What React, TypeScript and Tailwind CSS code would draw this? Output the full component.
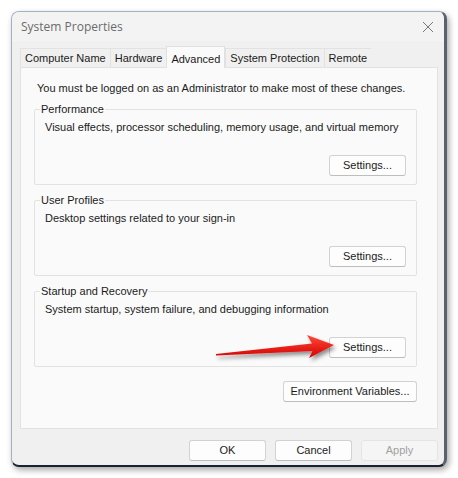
import React from "react";

const font = { fontFamily: '"Liberation Sans", Arial, sans-serif' };

function Btn({ label, w = "w-[77px]", disabled = false }: { label: string; w?: string; disabled?: boolean }) {
  return (
    <button
      className={`${w} h-[21px] rounded-[3px] border text-[11px] leading-none flex items-center justify-center ${
        disabled
          ? "bg-[#f5f5f5] border-[#e4e4e4] text-[#a0a0a0]"
          : "bg-[#fdfdfd] border-[#d2d2d2] border-b-[#bdbdbd] text-[#1b1b1b]"
      }`}
    >
      {label}
    </button>
  );
}

function Group({ title, desc }: { title: string; desc: string }) {
  return (
    <fieldset className="min-w-0 border border-[#e2e2e2] rounded-[2px] ml-[13px] mr-[20px] px-[6px] h-[81px] flex flex-col">
      <legend className="px-[1px] -ml-[1px] text-[11px] text-[#1b1b1b] leading-none">{title}</legend>
      <div className="text-[11px] text-[#1b1b1b] leading-none mt-[7px] ml-[4px] whitespace-nowrap">{desc}</div>
      <div className="flex-1" />
      <div className="flex justify-end mb-[8px] mr-[4px]">
        <Btn label="Settings..." />
      </div>
    </fieldset>
  );
}

export default function App() {
  const tabs = ["Computer Name", "Hardware", "Advanced", "System Protection", "Remote"];
  return (
    <div className="w-[458px] h-[478px] bg-white relative" style={font}>
      <div className="absolute left-[11px] top-[11px] w-[436px] h-[456px] rounded-[8px] bg-[#f0f0f0] border-l border-t border-[#9fb3c8] border-r-[3px] border-r-[#5a6270] border-b-[2px] border-b-[#1d2233] shadow-[2px_3px_6px_rgba(0,0,0,0.35)] flex flex-col overflow-hidden">
        {/* title bar */}
        <div className="h-[29px] flex items-center justify-between pl-[9px] pr-[10px] bg-[#f3f3f3]">
          <span className="text-[12px] text-[#6b6b6b]" style={{ fontFamily: '"Open Sans", "Noto Sans", sans-serif' }}>
            System Properties
          </span>
          <svg width="12" height="12" viewBox="0 0 12 12">
            <path d="M1 1L11 11M11 1L1 11" stroke="#777" strokeWidth="1" />
          </svg>
        </div>
        {/* tabs */}
        <div className="flex items-end h-[26px] pl-[8px]">
          {tabs.map((t) => (
            <div
              key={t}
              className={
                t === "Advanced"
                  ? "h-[22px] px-[4px] bg-[#fafafa] border border-b-0 border-[#e0e0e0] text-[11px] text-[#1b1b1b] flex items-start pt-[4px] relative top-[1px]"
                  : "h-[19px] px-[4px] bg-[#f0f0f0] border border-b-0 border-r-0 border-[#e2e2e2] text-[11px] text-[#1b1b1b] flex items-center"
              }
            >
              {t}
            </div>
          ))}
        </div>
        {/* panel */}
        <div className="ml-[8px] mr-[6px] h-[362px] bg-[#fafafa] border border-[#e2e2e2] flex flex-col">
          <div className="text-[11px] text-[#1b1b1b] leading-none mt-[15px] ml-[16px] whitespace-nowrap">
            You must be logged on as an Administrator to make most of these changes.
          </div>
          <div className="mt-[10px]">
            <Group title="Performance" desc="Visual effects, processor scheduling, memory usage, and virtual memory" />
          </div>
          <div className="mt-[10px]">
            <Group title="User Profiles" desc="Desktop settings related to your sign-in" />
          </div>
          <div className="mt-[10px]">
            <Group title="Startup and Recovery" desc="System startup, system failure, and debugging information" />
          </div>
          <div className="flex justify-end mr-[20px] mt-[14px]">
            <Btn label="Environment Variables..." w="w-[134px]" />
          </div>
        </div>
        {/* footer */}
        <div className="flex justify-end gap-[9px] mr-[6px] mt-[11px]">
          <Btn label="OK" />
          <Btn label="Cancel" />
          <Btn label="Apply" disabled />
        </div>
      </div>
      {/* red arrow annotation */}
      <svg className="absolute left-0 top-0" width="458" height="478" viewBox="0 0 458 478">
        <defs>
          <linearGradient id="ag" x1="0" y1="0" x2="0" y2="1">
            <stop offset="0" stopColor="#ff4a3a" />
            <stop offset="1" stopColor="#d40000" />
          </linearGradient>
          <filter id="sh" x="-20%" y="-50%" width="140%" height="200%">
            <feDropShadow dx="2" dy="3" stdDeviation="2" floodColor="#000" floodOpacity="0.45" />
          </filter>
        </defs>
        <path
          d="M216 354 L312 343.5 L307 335 L334 345 L309 358 L312.5 351 L216 355.5 Z"
          fill="url(#ag)"
          filter="url(#sh)"
        />
      </svg>
    </div>
  );
}
